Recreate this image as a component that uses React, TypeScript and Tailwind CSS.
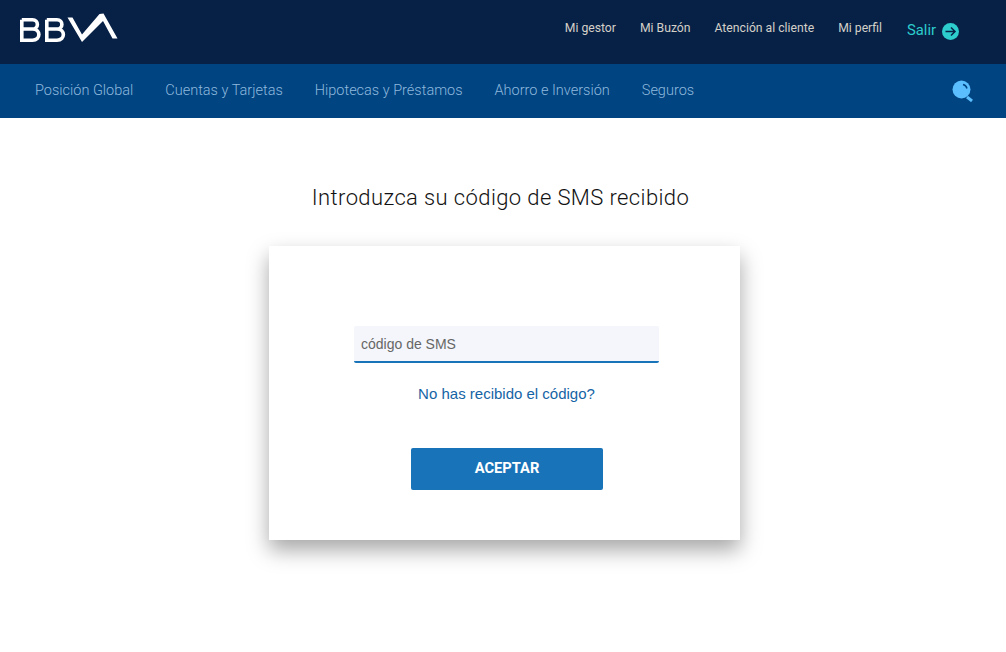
import React from "react";

const top = ["Mi gestor", "Mi Buzón", "Atención al cliente", "Mi perfil"];
const nav = ["Posición Global", "Cuentas y Tarjetas", "Hipotecas y Préstamos", "Ahorro e Inversión", "Seguros"];

function Logo() {
  return (
    <svg width="98" height="30" viewBox="0 0 98 30" fill="none" stroke="#fff" strokeWidth="3.6" className="block">
      <path d="M1.8 6.8 H12.5 C19 6.8 19 16 12.5 16 H1.8 M12.5 16 C21 16 21 27.2 12.5 27.2 H1.8 V6.8" />
      <path d="M26.8 6.8 H37 C43.5 6.8 43.5 16 37 16 H26.8 M37 16 C45.5 16 45.5 27.2 37 27.2 H26.8 V6.8" />
      <path d="M47.5 4.5 L52.5 4.5 L62 21.5 L79.5 1 L83.5 0.5 L97.5 25.5 L92.5 25.5 L83 8 L62 29 Z" fill="#fff" stroke="none" />
    </svg>
  );
}

export default function App() {
  return (
    <div className="min-h-[652px] bg-white font-['Roboto',sans-serif] font-light">
      <header className="h-[64px] bg-[#072146] flex justify-between pl-[20px] pr-[47px]">
        <div className="pt-[13px]"><Logo /></div>
        <div className="flex items-start pt-[21px] text-[12.2px] leading-[15px] font-normal text-[#d4d0c8]">
          <div className="flex gap-[24px] mr-[25px]">
            {top.map((t) => <span key={t}>{t}</span>)}
          </div>
          <span className="flex items-center gap-[6px] -mt-[1px] text-[14.8px] leading-[20px] font-normal text-[#2dcccd]">
            Salir
            <svg width="17" height="17" viewBox="0 0 17 17" className="mt-[2px]">
              <circle cx="8.5" cy="8.5" r="8.5" fill="#2dcccd" />
              <path d="M3.5 8.5 H13 M9 4.5 L13 8.5 L9 12.5" stroke="#072146" strokeWidth="1.5" fill="none" />
            </svg>
          </span>
        </div>
      </header>
      <nav className="h-[54px] bg-[#004481] flex items-center justify-between pl-[35px] pr-[32px]">
        <div className="flex gap-[32px] text-[14.5px] leading-[18px] -mt-[1px] text-[#8fb9de]">
          {nav.map((t) => <span key={t}>{t}</span>)}
        </div>
        <svg width="22" height="22" viewBox="0 0 22 22">
          <circle cx="9.5" cy="9.5" r="9" fill="#5bbeff" />
          <path d="M15 17 L20 21" stroke="#5bbeff" strokeWidth="3" />
          <path d="M11 4.5 C13 5 14.5 6.5 15 8.5" stroke="#004481" strokeWidth="1.4" fill="none" />
        </svg>
      </nav>
      <main>
        <h1 className="mt-[65px] mr-[5px] text-center text-[22px] leading-[30px] font-light tracking-[0.39px] text-[#121212]">
          Introduzca su código de SMS recibido
        </h1>
        <div className="mt-[33px] ml-[269px] w-[471px] h-[294px] bg-white shadow-[0_10px_20px_rgba(0,0,0,0.35)] flex flex-col pt-[80px] pl-[85px] pr-[81px]">
          <div className="h-[37px] pt-[1px] bg-[#f4f6fb] border-b-2 border-[#1973b8] rounded-[2px] pl-[7px] flex items-center font-['Liberation_Sans',sans-serif] font-normal text-[14px] text-[#666666]">
            código de SMS
          </div>
          <p className="mt-[22px] text-center font-['Liberation_Sans',sans-serif] font-normal text-[15px] leading-[18px] text-[#1464a5]">
            No has recibido el código?
          </p>
          <button className="mt-[45px] ml-[57px] w-[192px] h-[42px] pb-[2px] bg-[#1973b8] rounded-[2px] text-white font-['Roboto',sans-serif] font-bold text-[14.7px]">
            ACEPTAR
          </button>
        </div>
      </main>
    </div>
  );
}
